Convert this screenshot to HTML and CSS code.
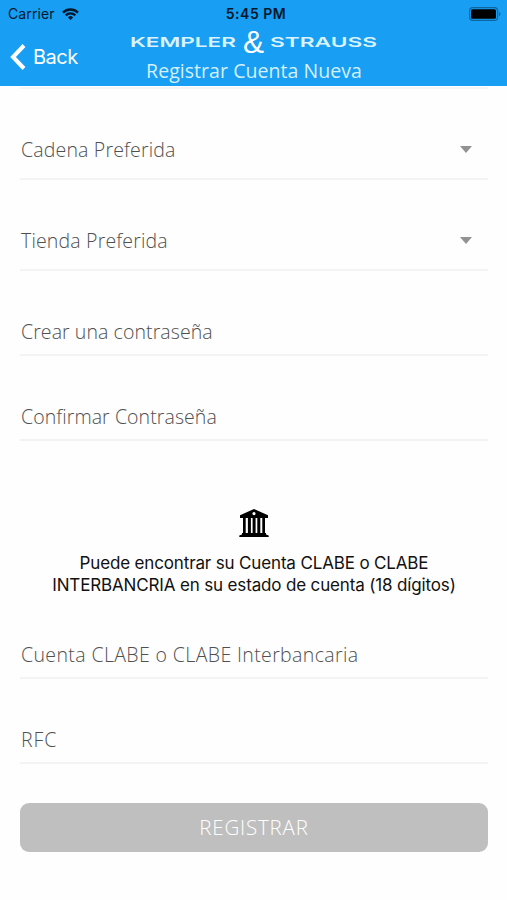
FILE: index.html
```html
<!DOCTYPE html>
<html lang="es">
<head>
    <meta charset="UTF-8">
    <meta name="viewport" content="width=device-width, initial-scale=1.0">
    <title>Registrar Cuenta Nueva</title>
    <link rel="stylesheet" href="styles.css">
</head>
<body>
    <header class="header">
        <div class="status-bar">
            <div class="carrier">
                <span>Carrier</span>
                <svg width="17" height="12" viewBox="0 0 17 12" fill="none" stroke="#04182c" stroke-width="2.3">
                    <path d="M1 4.6a10.6 10.6 0 0 1 15 0"/>
                    <path d="M3.7 7.4a6.8 6.8 0 0 1 9.6 0"/>
                    <path d="M8.5 12L5.9 9.4a3.7 3.7 0 0 1 5.2 0z" fill="#04182c" stroke="none"/>
                </svg>
            </div>
            <span class="time">5:45 PM</span>
            <svg class="battery" width="32" height="14" viewBox="0 0 32 14">
                <rect x=".6" y=".6" width="28" height="12.8" rx="3.2" fill="none" stroke="#0e649e" stroke-width="1.2"/>
                <rect x="2" y="2.2" width="25" height="9.6" rx="1.6" fill="#000"/>
                <path d="M30 4.8v4.4c2-.8 2-3.6 0-4.4z" fill="#0e649e"/>
            </svg>
        </div>
        <div class="nav">
            <a class="back">
                <svg width="16" height="26" viewBox="0 0 16 26" fill="none" stroke="#fff" stroke-width="4">
                    <path d="M14 1.5L3 13l11 11.5"/>
                </svg>
                <span>Back</span>
            </a>
            <div class="title">
                <svg class="logo" width="248" height="30" viewBox="0 0 248 30">
                    <text class="brand" x="0" y="19.5" textLength="106" lengthAdjust="spacingAndGlyphs">KEMPLER</text>
                    <text class="amp" x="113" y="26" textLength="21" lengthAdjust="spacingAndGlyphs">&amp;</text>
                    <text class="brand" x="140" y="19.5" textLength="107" lengthAdjust="spacingAndGlyphs">STRAUSS</text>
                </svg>
                <h1>Registrar Cuenta Nueva</h1>
            </div>
        </div>
    </header>

    <main class="form">
        <div class="field select">
            <span>Cadena Preferida</span>
            <i class="arrow"></i>
        </div>
        <div class="field select">
            <span>Tienda Preferida</span>
            <i class="arrow"></i>
        </div>
        <div class="field"><span class="password">Crear una contraseña</span></div>
        <div class="field"><span class="password">Confirmar Contraseña</span></div>

        <div class="info">
            <svg width="30" height="28" viewBox="0 0 30 28">
                <path fill-rule="evenodd" d="M15 0L29 6.3V9H1V6.3zM15 3a1.6 1.6 0 1 0 0 3.2A1.6 1.6 0 0 0 15 3z"/>
                <path d="M4 9h2.7v16H4zM8.9 9h3v16h-3zM13.6 9h3v16h-3zM18.3 9h3v16h-3zM23.3 9H26v16h-2.7z"/>
                <path d="M3 24h24v1.6l2.7.8V28H.3v-1.6L3 25.6z"/>
            </svg>
            <p>Puede encontrar su Cuenta CLABE o CLABE<br>INTERBANCRIA en su estado de cuenta (18 dígitos)</p>
        </div>

        <div class="field"><span class="clabe">Cuenta CLABE o CLABE Interbancaria</span></div>
        <div class="field"><span class="rfc">RFC</span></div>

        <button class="submit">REGISTRAR</button>
    </main>
</body>
</html>
```
FILE: styles.css
```css
body {
    margin: 0;
    background: #fefefe;
    font-family: "Open Sans", "Noto Sans", sans-serif;
    font-weight: 300;
}
.header {
    height: 86px;
    background: #189ef2;
    color: #fff;
}
.status-bar {
    display: grid;
    grid-template-columns: 1fr auto 1fr;
    align-items: center;
    height: 27px;
    padding: 0 6px 0 8px;
    color: #04182c;
    font-family: Inter, "Liberation Sans", sans-serif;
    font-size: 14px;
    font-weight: 400;
}
.carrier {
    display: flex;
    align-items: center;
    gap: 7px;
    letter-spacing: 0.1px;
}
.time {
    padding-left: 3px;
    font-weight: 600;
    letter-spacing: 0.5px;
}
.battery {
    justify-self: end;
}
.nav {
    display: grid;
    grid-template-columns: 130px 248px 1fr;
    height: 59px;
}
.back {
    display: flex;
    align-items: center;
    gap: 7px;
    padding-left: 10px;
    font-family: Inter, "Liberation Sans", sans-serif;
    font-size: 20px;
    font-weight: 400;
    letter-spacing: -0.5px;
}
.title {
    text-align: center;
}
.logo {
    display: block;
    overflow: visible;
}
.brand {
    fill: #d9f3ff;
    font-family: Inter, sans-serif;
    font-size: 13px;
    font-weight: 600;
}
.amp {
    fill: #fff;
    font-family: "Liberation Sans", sans-serif;
    font-size: 31px;
    font-weight: 400;
}
h1 {
    margin: 2px 0 0;
    color: #d3f0ff;
    font-size: 19.5px;
    font-weight: 400;
    line-height: 24px;
    letter-spacing: 0.05px;
    white-space: nowrap;
}
.form {
    margin: 0 19px 0 20px;
    padding-top: 2px;
    border-top: 1px solid #fefefe;
    box-shadow: inset 0 2px #f3f5f6;
}
.field {
    display: flex;
    align-items: center;
    justify-content: space-between;
    box-sizing: border-box;
    height: 85px;
    padding: 37px 16px 0 1px;
    border-bottom: 2px solid #f3f3f3;
    color: #505050;
    font-size: 19.5px;
    letter-spacing: 0.17px;
    white-space: nowrap;
}
.select {
    height: 91px;
    padding-top: 31px;
}
.arrow {
    border: 6px solid transparent;
    border-top: 7px solid #929292;
    border-bottom: 0;
}
.password {
    letter-spacing: 0.08px;
}
.clabe {
    letter-spacing: 0.38px;
}
.rfc {
    letter-spacing: 0.9px;
}
.info {
    box-sizing: border-box;
    height: 153px;
    padding-top: 68px;
    color: #111;
    text-align: center;
    font-family: Inter, "Liberation Sans", sans-serif;
    font-size: 17px;
    font-weight: 400;
    letter-spacing: -0.15px;
}
.info svg {
    display: block;
    margin: 0 auto;
}
.info p {
    margin: 15px 0 0;
    line-height: 22px;
    white-space: nowrap;
}
.submit {
    display: block;
    width: 100%;
    height: 49px;
    margin-top: 39px;
    padding: 0 0 2px;
    border: none;
    border-radius: 9px;
    background: #bfbfbf;
    color: #fff;
    font-family: inherit;
    font-size: 20.5px;
    font-weight: 300;
    letter-spacing: 0.8px;
}
```
